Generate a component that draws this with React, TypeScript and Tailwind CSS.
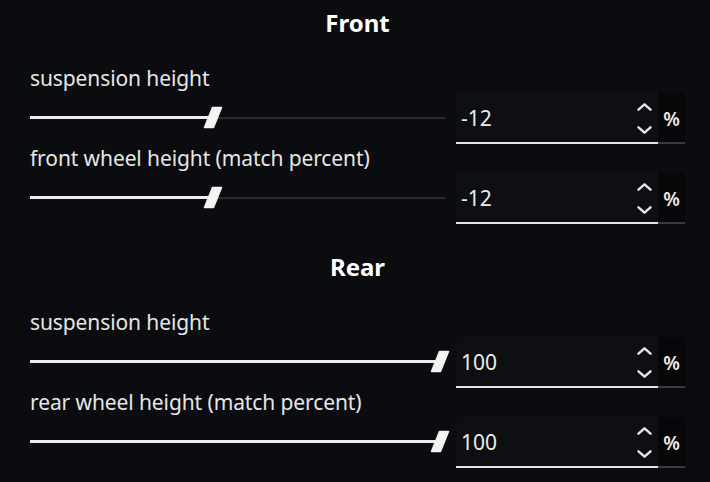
import React from "react";

type Row = { label: string; value: number };

const sections: { title: string; rows: Row[] }[] = [
  {
    title: "Front",
    rows: [
      { label: "suspension height", value: -12 },
      { label: "front wheel height (match percent)", value: -12 },
    ],
  },
  {
    title: "Rear",
    rows: [
      { label: "suspension height", value: 100 },
      { label: "rear wheel height (match percent)", value: 100 },
    ],
  },
];

function Slider({ value }: { value: number }) {
  const frac = (value + 100) / 200;
  return (
    <div className="relative h-[22px] flex-1">
      <div className="absolute left-0 right-0 top-[10px] h-[2px] bg-[#2c2d30]" />
      <div
        className="absolute left-0 top-[9px] h-[3px] bg-[#ececec]"
        style={{ width: `calc(${frac} * (100% - 9px) + 4px)` }}
      />
      <svg
        className="absolute -top-[1px]"
        style={{ left: `calc(${frac} * (100% - 9px) - 6px)` }}
        width="20"
        height="23"
        viewBox="0 0 20 23"
      >
        <polygon
          points="9.5,1.5 18.5,1.5 10.5,21.5 1.5,21.5"
          fill="#f4f4f4"
          stroke="#f4f4f4"
          strokeWidth="1.5"
          strokeLinejoin="round"
        />
      </svg>
    </div>
  );
}

function NumberField({ value }: { value: number }) {
  return (
    <div className="flex h-[51px] w-[229px]">
      <div className="relative flex w-[202px] items-center rounded-tl-[4px] border-b-2 border-[#e4e4e4] bg-[#0e0f12] pl-[5px] pt-[4px] text-[21px] text-[#ececec]">
        {value}
        <div className="absolute right-[6px] top-[10px] flex flex-col gap-[15px]">
          <svg width="15" height="8" viewBox="0 0 15 8">
            <path d="M1.5 6.7 L7.5 1.3 L13.5 6.7" fill="none" stroke="#e6e6e6" strokeWidth="2.4" strokeLinecap="round" strokeLinejoin="round" />
          </svg>
          <svg width="15" height="8" viewBox="0 0 15 8">
            <path d="M1.5 1.3 L7.5 6.7 L13.5 1.3" fill="none" stroke="#e6e6e6" strokeWidth="2.4" strokeLinecap="round" strokeLinejoin="round" />
          </svg>
        </div>
      </div>
      <div className="flex w-[27px] items-center justify-center rounded-tr-[4px] border-b-2 border-[#3a3b3e] bg-[#070709] pt-[4px] text-[19px] font-semibold text-[#ececec]">
        %
      </div>
    </div>
  );
}

export default function App() {
  return (
    <div
      className="h-[482px] w-[710px] overflow-hidden bg-[#0b0c0f] pl-[30px] pr-[25px]"
      style={{ fontFamily: '"Noto Sans", "Open Sans", sans-serif' }}
    >
      {sections.map((section, i) => (
        <div key={section.title} className={i === 0 ? "pt-[7px]" : "pt-[27px]"}>
          <h2 className="mb-[25px] h-[32px] text-center text-[24px] leading-[32px] font-bold text-white">
            {section.title}
          </h2>
          {section.rows.map((row) => (
            <div key={row.label}>
              <div className="h-[28px] text-[21px] leading-[28px] tracking-[-0.1px] text-[#e6e6e6]">{row.label}</div>
              <div className="flex h-[52px] items-center gap-[11px]">
                <Slider value={row.value} />
                <NumberField value={row.value} />
              </div>
            </div>
          ))}
        </div>
      ))}
    </div>
  );
}
